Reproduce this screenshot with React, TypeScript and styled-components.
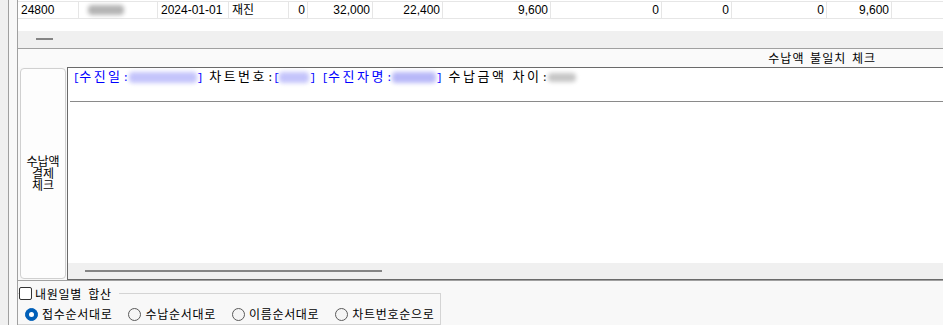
import styled, { createGlobalStyle } from "styled-components";

/* --------------------------------------------------------
   GLOBAL
-------------------------------------------------------- */
const Global = createGlobalStyle`
  html, body {
    margin: 0;
    padding: 0;
    background: #f0f0f0;
  }
  body {
    font-family: "Liberation Sans", "Noto Sans CJK KR", sans-serif;
    font-size: 12px;
    color: #000;
  }
`;

/* --------------------------------------------------------
   DATA
-------------------------------------------------------- */
type Col = { w?: number; align: "left" | "right"; text?: string; blur?: number };

const cols: Col[] = [
  { w: 61, align: "left", text: "24800" },
  { w: 79, align: "left", blur: 36 },
  { w: 71, align: "left", text: "2024-01-01" },
  { w: 60, align: "left", text: "재진" },
  { w: 19, align: "right", text: "0" },
  { w: 65, align: "right", text: "32,000" },
  { w: 70, align: "right", text: "22,400" },
  { w: 108, align: "right", text: "9,600" },
  { w: 111, align: "right", text: "0" },
  { w: 70, align: "right", text: "0" },
  { w: 95, align: "right", text: "0" },
  { w: 65, align: "right", text: "9,600" },
  { align: "left" },
];

const sortOptions = ["접수순서대로", "수납순서대로", "이름순서대로", "차트번호순으로"];

/* --------------------------------------------------------
   STYLES
-------------------------------------------------------- */
const Screen = styled.div`
  width: 943px;
  height: 325px;
  display: flex;
  overflow: hidden;
  background: #f0f0f0;
`;

const Gutter = styled.div<{ $bg: string }>`
  width: 8px;
  flex: none;
  background: ${(p) => p.$bg};
  border-right: 1px solid #a0a0a0;
`;

const Main = styled.div`
  flex: 1;
  min-width: 0;
  display: flex;
  flex-direction: column;
  background: #f8f8f8;
`;

const Grid = styled.div`
  height: 49px;
  box-sizing: border-box;
  padding-top: 1px;
  background: #fff;
  border-bottom: 1px solid #a0a0a0;
  display: flex;
  flex-direction: column;
`;

const Row = styled.div`
  height: 18px;
  box-sizing: border-box;
  display: flex;
  border-top: 1px solid #e6e6e6;
  border-bottom: 1px solid #e6e6e6;
`;

const Cell = styled.div<{ $w?: number; $align: "left" | "right" }>`
  ${(p) => (p.$w ? `width: ${p.$w}px; flex: none;` : "flex: 1;")}
  box-sizing: border-box;
  border-right: ${(p) => (p.$w ? "1px solid #e6e6e6" : "none")};
  display: flex;
  align-items: center;
  justify-content: ${(p) => (p.$align === "right" ? "flex-end" : "flex-start")};
  padding: ${(p) => (p.$align === "right" ? "0 2px 0 0" : "0 0 0 3px")};
  line-height: 16px;
  white-space: nowrap;
`;

const Blur = styled.span<{ $w: number; $c: string; $h?: number }>`
  display: inline-block;
  width: ${(p) => p.$w}px;
  height: ${(p) => p.$h ?? 10}px;
  background: ${(p) => p.$c};
  border-radius: 4px;
  filter: blur(2px);
  vertical-align: middle;
`;

const NameBlur = styled.span`
  margin-left: 6px;
  display: flex;
`;

const GridGap = styled.div`
  height: 12px;
`;

const HScroll = styled.div<{ $h: number; $top: number }>`
  height: ${(p) => p.$h}px;
  box-sizing: border-box;
  padding-top: ${(p) => p.$top}px;
  background: #f0f0f0;
  flex: none;
`;

const Thumb = styled.div<{ $left: number; $w: number }>`
  margin-left: ${(p) => p.$left}px;
  width: ${(p) => p.$w}px;
  height: 2px;
  background: #858585;
`;

const TitleBar = styled.div`
  height: 18px;
  display: flex;
  align-items: center;
  justify-content: flex-end;
  padding-right: 67px;
  font-family: "Noto Sans CJK KR", sans-serif;
  letter-spacing: 1px;
  word-spacing: 2px;
  background: #fafafa;
`;

const Section = styled.div`
  height: 215px;
  box-sizing: border-box;
  display: flex;
  border-bottom: 1px solid #a0a0a0;
`;

const SideButton = styled.button`
  margin: 1px 1px 1px 2px;
  width: 46px;
  padding: 0;
  box-sizing: border-box;
  background: #fdfdfd;
  border: 1px solid #d0d0d0;
  border-radius: 4px;
  font-family: "Noto Sans CJK KR", sans-serif;
  font-size: 12px;
  line-height: 12px;
  color: #000;
  text-align: center;
`;

const Memo = styled.div`
  flex: 1;
  display: flex;
  flex-direction: column;
  background: #fff;
  border-top: 1px solid #6a6a6a;
  border-left: 1px solid #6a6a6a;
  border-bottom: 1px solid #6a6a6a;
`;

const MemoHeader = styled.div`
  height: 34px;
  box-sizing: border-box;
  margin-left: 2px;
  padding: 0 0 0 3px;
  border-bottom: 1px solid #8a8a8a;
  line-height: 16px;
  white-space: pre;
`;

const Han = styled.span`
  font-family: "Noto Sans CJK KR", sans-serif;
  font-size: 13px;
  letter-spacing: 2.5px;
`;

const Asc = styled.span`
  font-family: "Liberation Mono", monospace;
  font-size: 11px;
  letter-spacing: -0.4px;
`;

const Blue = styled.span`
  color: #0000ff;
`;

const MemoBody = styled.div`
  flex: 1;
`;

const Footer = styled.div`
  flex: 1;
  padding-top: 6px;
  font-family: "Noto Sans CJK KR", sans-serif;
  letter-spacing: 0.7px;
`;

const Group = styled.fieldset`
  width: 423px;
  box-sizing: border-box;
  margin: 0;
  padding: 0 0 2px 7px;
  border: 1px solid #d4d4d4;
  border-left: none;
`;

const Legend = styled.legend`
  margin-left: -6px;
  padding: 0 7px 0 0;
  display: flex;
  align-items: center;
  gap: 3px;
  height: 13px;
  line-height: 13px;
  word-spacing: 3px;
`;

const CheckBox = styled.span`
  width: 13px;
  height: 13px;
  box-sizing: border-box;
  border: 1px solid #333;
  border-radius: 2px;
  background: #fff;
`;

const RadioRow = styled.div`
  height: 16px;
  margin-top: 6px;
  display: flex;
  align-items: center;
  gap: 16px;
`;

const RadioItem = styled.label`
  display: flex;
  align-items: center;
  gap: 4px;
  line-height: 16px;
`;

const Radio = styled.span<{ $on?: boolean }>`
  width: 13px;
  height: 13px;
  box-sizing: border-box;
  border-radius: 50%;
  display: flex;
  align-items: center;
  justify-content: center;
  background: ${(p) => (p.$on ? "#005fb8" : "#f5f5f5")};
  border: 1px solid ${(p) => (p.$on ? "#005fb8" : "#5a5a5a")};

  &::after {
    content: "";
    display: ${(p) => (p.$on ? "block" : "none")};
    width: 5px;
    height: 5px;
    border-radius: 50%;
    background: #fff;
  }
`;

/* memo text: hangul wide, ascii half width, like a fixed font */
function MemoText({ text }: { text: string }) {
  const parts = text.split(/([\uAC00-\uD7A3]+)/).filter(Boolean);
  return (
    <>
      {parts.map((p, i) =>
        /[\uAC00-\uD7A3]/.test(p) ? <Han key={i}>{p}</Han> : <Asc key={i}>{p}</Asc>
      )}
    </>
  );
}

export default function App() {
  return (
    <>
      <Global />
      <Screen>
        <Gutter $bg="#f0f0f0" />
        <Gutter $bg="#f8f8f8" />
        <Main>
          <Grid>
            <Row>
              {cols.map((c, i) => (
                <Cell key={i} $w={c.w} $align={c.align}>
                  {c.blur ? (
                    <NameBlur>
                      <Blur $w={c.blur} $c="#b4b4b4" />
                    </NameBlur>
                  ) : (
                    c.text
                  )}
                </Cell>
              ))}
            </Row>
            <GridGap />
            <HScroll $h={17} $top={7}>
              <Thumb $left={18} $w={17} />
            </HScroll>
          </Grid>

          <TitleBar>수납액 불일치 체크</TitleBar>

          <Section>
            <SideButton>
              수납액
              <br />
              결제
              <br />
              체크
            </SideButton>
            <Memo>
              <MemoHeader>
                <Blue>
                  <MemoText text="[수진일:" />
                </Blue>
                <Blur $w={68} $c="#c4c4fb" $h={11} />
                <Blue>
                  <MemoText text="]" />
                </Blue>
                <MemoText text=" 차트번호:" />
                <Blue>
                  <MemoText text="[" />
                </Blue>
                <Blur $w={30} $c="#c4c4fb" $h={11} />
                <Blue>
                  <MemoText text="] [수진자명:" />
                </Blue>
                <Blur $w={44} $c="#b8b8f8" $h={11} />
                <Blue>
                  <MemoText text="]" />
                </Blue>
                <MemoText text=" 수납금액 차이:" />
                <Blur $w={28} $c="#c6c6c6" $h={9} />
              </MemoHeader>
              <MemoBody />
              <HScroll $h={16} $top={7}>
                <Thumb $left={17} $w={297} />
              </HScroll>
            </Memo>
          </Section>

          <Footer>
            <Group>
              <Legend>
                <CheckBox />
                내원일별 합산
              </Legend>
              <RadioRow>
                {sortOptions.map((o, i) => (
                  <RadioItem key={o}>
                    <Radio $on={i === 0} />
                    {o}
                  </RadioItem>
                ))}
              </RadioRow>
            </Group>
          </Footer>
        </Main>
      </Screen>
    </>
  );
}
